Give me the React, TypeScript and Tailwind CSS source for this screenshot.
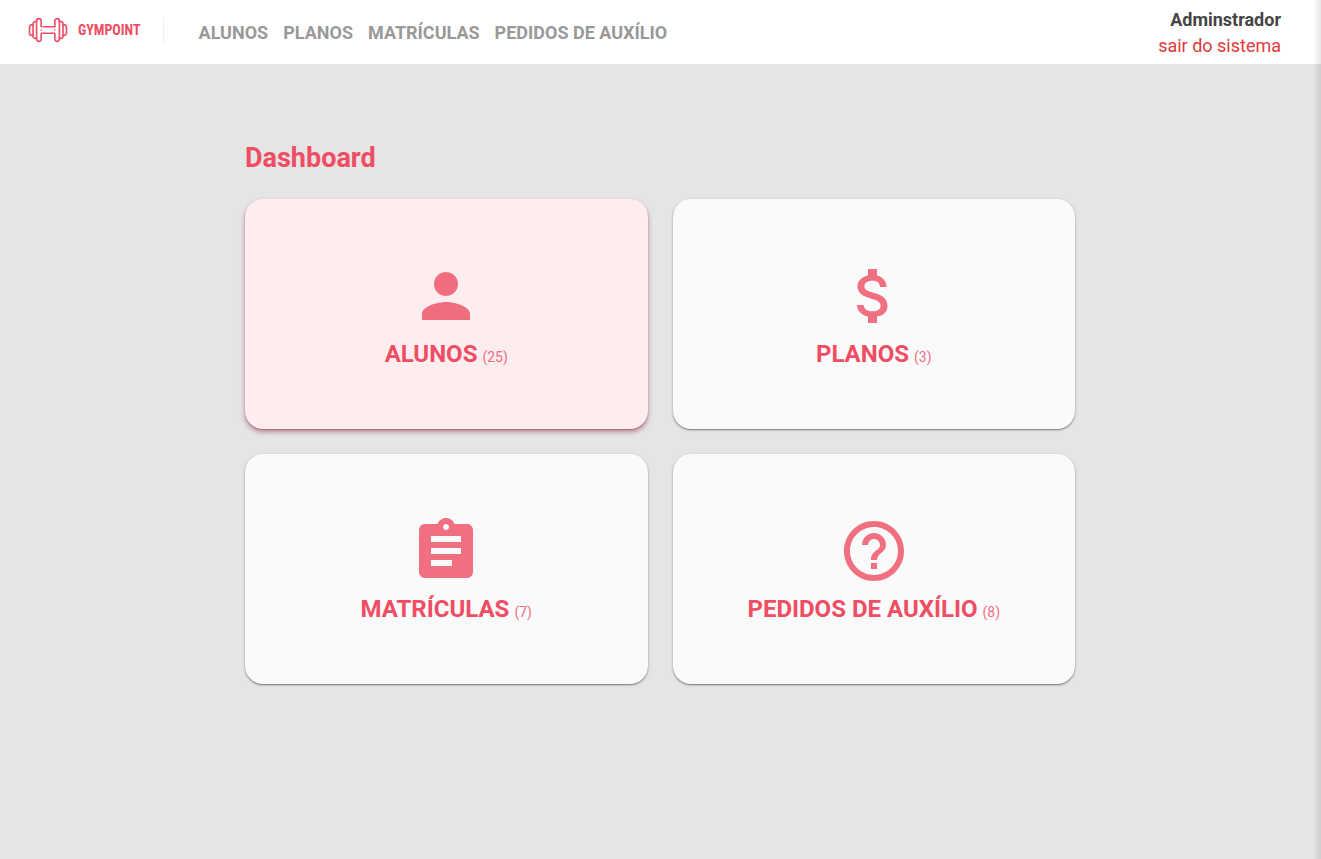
import type { IconType } from 'react-icons';
import { MdAssignment, MdAttachMoney, MdHelpOutline, MdPerson } from 'react-icons/md';

type Section = {
  name: string;
  href: string;
  count: number;
  icon: IconType;
  active?: boolean;
};

const sections: Section[] = [
  { name: 'ALUNOS', href: '#alunos', count: 25, icon: MdPerson, active: true },
  { name: 'PLANOS', href: '#planos', count: 3, icon: MdAttachMoney },
  { name: 'MATRÍCULAS', href: '#matriculas', count: 7, icon: MdAssignment },
  { name: 'PEDIDOS DE AUXÍLIO', href: '#pedidos', count: 8, icon: MdHelpOutline },
];

function Dumbbell() {
  return (
    <svg
      width="40"
      height="26"
      viewBox="0 0 40 26"
      fill="none"
      stroke="#ee4d64"
      strokeWidth="1.6"
      strokeLinecap="round"
      strokeLinejoin="round"
      aria-hidden="true"
    >
      <path d="M13.2 9.8V3.9a2.3 2.3 0 0 0-4.6 0v18.2a2.3 2.3 0 0 0 4.6 0v-5.8H24" />
      <path d="M8.6 4.6H7.2A2.2 2.2 0 0 0 5 6.8v12.4a2.2 2.2 0 0 0 2.2 2.2h1.4" />
      <path d="M5 7.6H4a2.5 2.5 0 0 0-2.5 2.5v5.8A2.5 2.5 0 0 0 4 18.4h1" />
      <path d="M26.8 9.8V3.9a2.3 2.3 0 0 1 4.6 0v18.2a2.3 2.3 0 0 1-4.6 0v-5.8H24" />
      <path d="M31.4 4.6h1.4A2.2 2.2 0 0 1 35 6.8v12.4a2.2 2.2 0 0 1-2.2 2.2h-1.4" />
      <path d="M35 7.6h1a2.5 2.5 0 0 1 2.5 2.5v5.8a2.5 2.5 0 0 1-2.5 2.5h-1" />
      <path d="M15 9.8H26.8" />
      <path d="M13.2 13v.01M26.8 13v.01" />
    </svg>
  );
}

function Header() {
  return (
    <header className="flex h-16 items-center justify-between bg-white pr-10 pl-7">
      <div className="flex items-center">
        <a href="#inicio" className="-mt-1 flex items-center gap-2.5 border-r border-[#eee] pr-[22px]">
          <Dumbbell />
          <span className="font-['Roboto_Condensed',Roboto,sans-serif] text-[14px] leading-4 font-bold text-[#ee4d64]">
            GYMPOINT
          </span>
        </a>
        <nav className="ml-[35px] flex gap-[15px] pt-0.5 text-[18px] leading-6 font-bold text-[#999]">
          {sections.map((section) => (
            <a key={section.name} href={section.href}>
              {section.name}
            </a>
          ))}
        </nav>
      </div>
      <div className="flex flex-col items-end pt-0.5 text-[18px] leading-[26px]">
        <strong className="font-bold text-[#444]">Adminstrador</strong>
        <button type="button" className="text-[#de3b3b]">
          sair do sistema
        </button>
      </div>
    </header>
  );
}

function Card({ name, href, count, icon: Icon, active }: Section) {
  const tone = active
    ? 'bg-[#fdedef] shadow-[0_1px_1px_rgba(138,48,72,0.4),0_3px_5px_rgba(138,48,72,0.5)]'
    : 'bg-[#fafafa] shadow-[0_1px_3px_rgba(0,0,0,0.25),0_1px_1px_rgba(0,0,0,0.3)]';
  return (
    <a
      href={href}
      className={`flex h-[230px] flex-col items-center justify-center rounded-[18px] text-[#ee4d64] ${tone}`}
    >
      <Icon size={72} className="opacity-80" aria-hidden="true" />
      <span className="mt-2 flex items-baseline gap-[5px] text-2xl leading-7 font-bold">
        {name}
        <small className="text-sm font-normal opacity-80">({count})</small>
      </span>
    </a>
  );
}

export default function App() {
  return (
    <div className="relative min-h-screen bg-[#e5e5e5] font-[Roboto,sans-serif]">
      <Header />
      <main className="mx-auto max-w-[831px] pt-[76px] pr-px">
        <h1 className="text-[27px] leading-9 font-bold text-[#ee4d64]">Dashboard</h1>
        <div className="mt-[23px] grid grid-cols-2 gap-[25px]">
          {sections.map((section) => (
            <Card key={section.name} {...section} />
          ))}
        </div>
      </main>
      <div className="pointer-events-none absolute inset-y-0 right-0 w-2 bg-linear-to-r from-transparent to-black/10" />
    </div>
  );
}
